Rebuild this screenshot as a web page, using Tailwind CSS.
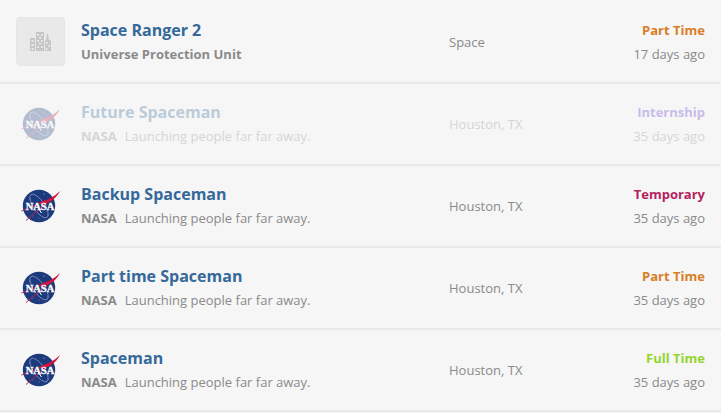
<!DOCTYPE html>
<html lang="en">
<head>
    <meta charset="UTF-8">
    <meta name="viewport" content="width=device-width, initial-scale=1.0">
    <title>Job Listings</title>
    <script src="https://cdn.jsdelivr.net/npm/@tailwindcss/browser@4"></script>
</head>
<body class="bg-[#f6f6f6] text-[#8a8a8a] font-['Open_Sans',sans-serif] text-[13px] leading-6 min-h-screen pt-px">
    <svg class="hidden">
        <symbol id="nasa" viewBox="0 0 49 48">
            <circle cx="23" cy="24" r="16.2" fill="#1d3a7c"/>
            <g fill="#c5d0e6">
                <circle cx="14" cy="17" r=".5"/>
                <circle cx="28" cy="12" r=".5"/>
                <circle cx="32" cy="33" r=".5"/>
                <circle cx="17" cy="34" r=".4"/>
                <circle cx="23" cy="36" r=".4"/>
            </g>
            <ellipse cx="23" cy="24" rx="5.5" ry="14" transform="rotate(-35 23 24)" fill="none" stroke="#7288bb" stroke-width=".9"/>
            <path d="M5.500 29L27 20.500M10 38.500L31 20.500" stroke="#c4254c" stroke-width="1" fill="none"/>
            <path d="M44 9C38 15 32 17.500 23 20.500L26.500 23C36 20 41 15 44 9Z" fill="#d0143c"/>
            <text x="24" y="27.500" text-anchor="middle" font-family="Liberation Serif, serif" font-weight="700" font-size="10.5" fill="#fff" stroke="#fff" stroke-width=".3">NASA</text>
            <path d="M23.500 28L25.500 31" stroke="#fff" stroke-width="1"/>
        </symbol>
    </svg>

    <ul>
        <li class="border-b-2 border-[#e9e9e9]">
            <a href="#" class="grid grid-cols-[49px_22fr_9fr_96px] gap-x-4 items-center p-4">
                <span class="flex items-center justify-center size-[49px] rounded bg-[#e9e9e9] border border-[#e6e6e6]">
                    <svg class="w-[22px] h-5" viewBox="0 0 22 20">
                        <path d="M0 6h5v13H0zM6 0h8v19H6zM15 9l1.500-2V4l1-3 1 3v3l2.500 2v10h-6z" fill="#c6c6c6"/>
                        <path d="M1.500 8h2v2h-2zM1.500 12h2v2h-2zM1.500 16h2v2h-2zM7.500 2h1.500v2h-1.500zM11 2h1.500v2H11zM9 5h2v1.500H9zM7.500 8h1.500v2h-1.500zM11 8h1.500v2H11zM9 11h2v1.500H9zM7.500 14h1.500v2h-1.500zM11 14h1.500v2H11zM16 10h1.500v2H16zM18.500 13h1.500v2h-1.500zM16 16h1.500v2H16z" fill="#ececec"/>
                    </svg>
                </span>
                <div>
                    <h3 class="text-base leading-6 font-bold text-[#34699a]">Space Ranger 2</h3>
                    <p><strong>Universe Protection Unit</strong></p>
                </div>
                <p>Space</p>
                <div class="text-right">
                    <p class="font-bold text-[#d97d26]">Part Time</p>
                    <p>17 days ago</p>
                </div>
            </a>
        </li>
        <li class="border-b-2 border-[#e9e9e9]">
            <a href="#" class="grid grid-cols-[49px_22fr_9fr_96px] gap-x-4 items-center p-4 opacity-30">
                <svg class="w-[49px] h-12"><use href="#nasa"/></svg>
                <div>
                    <h3 class="text-base leading-6 font-bold text-[#34699a]">Future Spaceman</h3>
                    <p><strong class="mr-2">NASA</strong>Launching people far far away.</p>
                </div>
                <p>Houston, TX</p>
                <div class="text-right">
                    <p class="font-bold text-[#6033cc]">Internship</p>
                    <p>35 days ago</p>
                </div>
            </a>
        </li>
        <li class="border-b-2 border-[#e9e9e9]">
            <a href="#" class="grid grid-cols-[49px_22fr_9fr_96px] gap-x-4 items-center p-4">
                <svg class="w-[49px] h-12"><use href="#nasa"/></svg>
                <div>
                    <h3 class="text-base leading-6 font-bold text-[#34699a]">Backup Spaceman</h3>
                    <p><strong class="mr-2">NASA</strong>Launching people far far away.</p>
                </div>
                <p>Houston, TX</p>
                <div class="text-right">
                    <p class="font-bold text-[#b3225f]">Temporary</p>
                    <p>35 days ago</p>
                </div>
            </a>
        </li>
        <li class="border-b-2 border-[#e9e9e9]">
            <a href="#" class="grid grid-cols-[49px_22fr_9fr_96px] gap-x-4 items-center p-4">
                <svg class="w-[49px] h-12"><use href="#nasa"/></svg>
                <div>
                    <h3 class="text-base leading-6 font-bold text-[#34699a]">Part time Spaceman</h3>
                    <p><strong class="mr-2">NASA</strong>Launching people far far away.</p>
                </div>
                <p>Houston, TX</p>
                <div class="text-right">
                    <p class="font-bold text-[#d97d26]">Part Time</p>
                    <p>35 days ago</p>
                </div>
            </a>
        </li>
        <li class="border-b-2 border-[#e9e9e9]">
            <a href="#" class="grid grid-cols-[49px_22fr_9fr_96px] gap-x-4 items-center p-4">
                <svg class="w-[49px] h-12"><use href="#nasa"/></svg>
                <div>
                    <h3 class="text-base leading-6 font-bold text-[#34699a]">Spaceman</h3>
                    <p><strong class="mr-2">NASA</strong>Launching people far far away.</p>
                </div>
                <p>Houston, TX</p>
                <div class="text-right">
                    <p class="font-bold text-[#95d42f]">Full Time</p>
                    <p>35 days ago</p>
                </div>
            </a>
        </li>
    </ul>
</body>
</html>
